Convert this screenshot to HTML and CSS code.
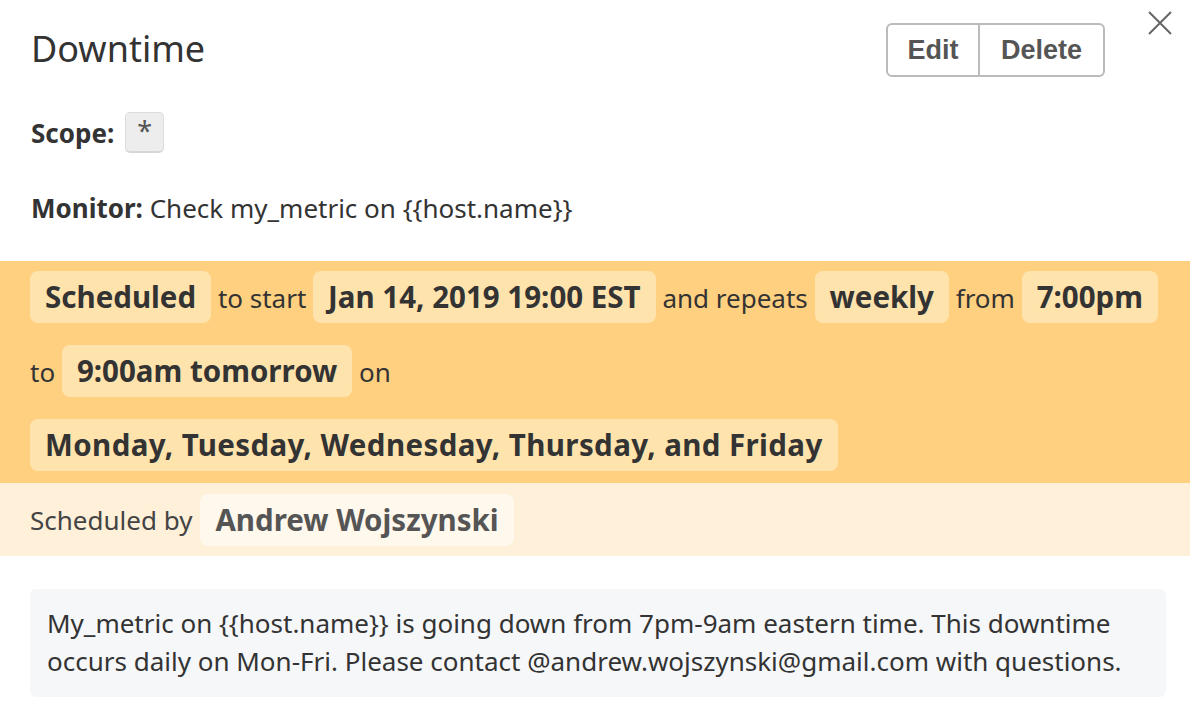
FILE: index.html
```html
<!DOCTYPE html>
<html>
<head>
<meta charset="utf-8">
<link rel="stylesheet" href="styles.css">
</head>
<body>
<div class="modal">
  <button class="close" aria-label="Close">
    <svg width="24" height="24" viewBox="0 0 24 24"><path d="M1 1L23 23M23 1L1 23" stroke="#666" stroke-width="2" fill="none"/></svg>
  </button>
  <div class="header">
    <h1 class="title">Downtime</h1>
    <div class="btn-group">
      <button class="btn btn-edit">Edit</button><button class="btn btn-delete">Delete</button>
    </div>
  </div>
  <div class="scope-row">
    <span class="label">Scope:</span>
    <span class="scope-chip">*</span>
  </div>
  <div class="monitor-row"><span class="label">Monitor:</span> Check my_metric on {{host.name}}</div>
  <div class="schedule">
    <span class="chip">Scheduled</span> to start <span class="chip">Jan 14, 2019 19:00 EST</span> and repeats <span class="chip">weekly</span> from <span class="chip">7:00pm</span> to <span class="chip">9:00am tomorrow</span> on <span class="chip chip-wide">Monday, Tuesday, Wednesday, Thursday, and Friday</span>
  </div>
  <div class="byline">
    <span class="byline-text">Scheduled by</span>
    <span class="chip chip-light">Andrew Wojszynski</span>
  </div>
  <div class="message">My_metric on {{host.name}} is going down from 7pm-9am eastern time. This downtime occurs daily on Mon-Fri. Please contact @andrew.wojszynski@gmail.com with questions.</div>
</div>
</body>
</html>
```
FILE: styles.css
```css
* { box-sizing: border-box; }
html, body { margin: 0; padding: 0; background: #fff; }
body {
  font-family: "Noto Sans", "Open Sans", sans-serif;
  color: #333;
  width: 1190px;
  height: 716px;
  overflow: hidden;
}
.modal { position: relative; }
.close {
  position: absolute;
  top: 11px;
  right: 18px;
  width: 24px;
  height: 24px;
  padding: 0;
  border: 0;
  background: none;
  display: flex;
}
.header {
  display: flex;
  align-items: center;
  justify-content: space-between;
  padding: 23px 85px 0 31px;
  height: 77px;
}
.title {
  margin: 0;
  font-size: 36px;
  font-weight: 400;
  color: #333;
  line-height: 54px;
  margin-top: -2px;
}
.btn-group { display: flex; height: 54px; }
.btn {
  font-family: "Liberation Sans", Arial, sans-serif;
  font-weight: 700;
  font-size: 27px;
  color: #555;
  background: #fff;
  border: 2px solid #bbb;
  height: 54px;
  padding: 0;
}
.btn-edit { border-radius: 6px 0 0 6px; width: 94px; }
.btn-delete { border-radius: 0 6px 6px 0; border-left: 0; width: 125px; }
.scope-row {
  display: flex;
  align-items: center;
  gap: 11px;
  padding-left: 31px;
  margin-top: 35px;
  height: 41px;
  font-size: 26px;
}
.label { font-weight: 700; }
.scope-chip {
  width: 39px;
  height: 41px;
  background: #ededed;
  border: 1px solid #ddd;
  border-bottom: 2px solid #d6d6d6;
  border-radius: 5px;
  display: flex;
  justify-content: center;
  align-items: flex-start;
  padding-top: 2px;
  font-size: 27px;
  color: #555;
  line-height: 32px;
}
.monitor-row {
  margin-top: 38px;
  padding-left: 31px;
  font-size: 26px;
  line-height: 34px;
}
.schedule {
  margin-top: 36px;
  background: #ffd080;
  padding: 0 22px 0 30px;
  font-size: 26px;
  line-height: 74px;
  color: #333;
}
.chip {
  display: inline-block;
  background: #ffe3ad;
  border-radius: 8px;
  padding: 0 15px;
  height: 52px;
  line-height: 52px;
  font-size: 29.5px;
  font-weight: 700;
  color: #333;
  vertical-align: baseline;
}
.chip-wide { letter-spacing: 0.4px; }
.byline {
  display: flex;
  align-items: center;
  gap: 8px;
  height: 73px;
  padding: 0 30px;
  background: #fff0d9;
  font-size: 26px;
  color: #444;
}
.chip-light {
  background: #fff8ec;
  color: #555;
}
.message {
  margin: 33px 24px 0 30px;
  background: #f6f7f9;
  border-radius: 6px;
  padding: 15px 16px 17px 17px;
  font-size: 26px;
  line-height: 38px;
  color: #333;
}
```
